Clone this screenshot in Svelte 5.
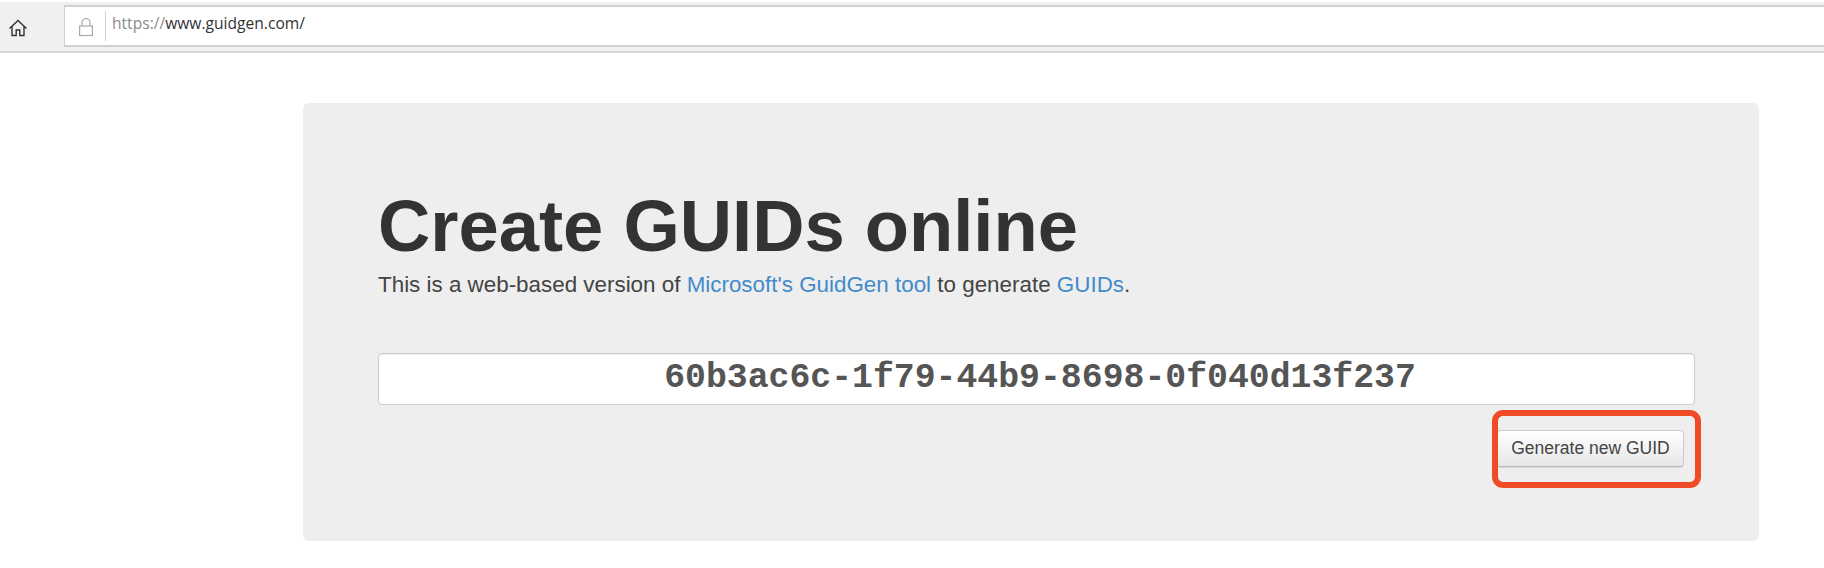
<script>
  const guid = '60b3ac6c-1f79-44b9-8698-0f040d13f237'
</script>

<div class="page">
  <header class="toolbar">
    <button class="home" aria-label="Home">
      <svg width="20" height="20" viewBox="0 0 20 20" fill="none" stroke="#333" stroke-width="1.4">
        <path d="M1.5 10.5 10 2.5l8.5 8M4 8.5V17.5h4.2v-5.5h3.6v5.5H16V8.5" />
      </svg>
    </button>
    <div class="address">
      <svg class="lock" width="16" height="20" viewBox="0 0 16 20" fill="none" stroke="#a8a8a8" stroke-width="1.2">
        <rect x="1.6" y="9" width="12.8" height="9.5" />
        <path d="M4 9V5.5a4 4 0 0 1 8 0V9" />
      </svg>
      <span class="divider"></span>
      <span class="url"><span class="scheme">https://</span>www.guidgen.com/</span>
    </div>
  </header>

  <main class="jumbotron">
    <h1>Create GUIDs online</h1>
    <p>
      This is a web-based version of <a href="#top">Microsoft's GuidGen tool</a> to generate <a href="#top">GUIDs</a>.
    </p>
    <div class="guid">{guid}</div>
    <div class="actions">
      <button class="generate">Generate new GUID</button>
      <span class="highlight"></span>
    </div>
  </main>
</div>

<style>
  :global(body) {
    background: #fff;
  }

  .page {
    width: 1824px;
    height: 568px;
    overflow: hidden;
    font-family: 'Liberation Sans', Arial, sans-serif;
  }

  .toolbar {
    display: flex;
    align-items: center;
    box-sizing: border-box;
    height: 51px;
    margin-top: 2px;
    background: #f0f0f0;
    border-bottom: 2px solid #d6d6d6;
  }

  .home {
    display: flex;
    align-items: center;
    justify-content: center;
    width: 64px;
    height: 100%;
    padding: 2px 28px 0 0;
    border: 0;
    background: none;
  }

  .address {
    display: flex;
    flex: 1;
    align-items: center;
    box-sizing: border-box;
    height: 42px;
    margin-top: -2px;
    padding-left: 13px;
    background: #fff;
    border: 1px solid #d0d0d0;
    border-right: 0;
    border-top-width: 2px;
    border-bottom-width: 2px;
  }

  .lock {
    margin-top: 2px;
  }

  .divider {
    width: 1px;
    height: 30px;
    margin-left: 11px;
    background: #d4d4d4;
  }

  .url {
    margin: -5px 0 0 6px;
    font-family: 'Open Sans', sans-serif;
    font-size: 15.6px;
    color: #333;
  }

  .scheme {
    color: #8a8a8a;
  }

  .jumbotron {
    box-sizing: border-box;
    width: 1456px;
    height: 438px;
    margin: 50px 0 0 303px;
    padding: 81px 64px 0 75px;
    background: #eee;
    border-radius: 6px;
    color: #333;
  }

  h1 {
    margin: 0;
    font-size: 72.4px;
    line-height: 84px;
    font-weight: 700;
    color: #333;
  }

  p {
    margin: 2px 0 0;
    font-size: 22.4px;
    line-height: 30px;
    color: #444;
  }

  a {
    color: #428bca;
    text-decoration: none;
  }

  .guid {
    box-sizing: border-box;
    height: 52px;
    margin-top: 53px;
    padding-left: 7px;
    background: #fff;
    border: 1px solid #ccc;
    border-radius: 4px;
    box-shadow: inset 0 1px 1px rgba(0, 0, 0, 0.075);
    font-family: 'Liberation Mono', 'Courier New', monospace;
    font-size: 34.8px;
    font-weight: 700;
    line-height: 48px;
    text-align: center;
    color: #555;
  }

  .actions {
    position: relative;
    display: flex;
    justify-content: flex-end;
    margin-top: 25px;
    padding-right: 11px;
  }

  .generate {
    width: 187px;
    height: 37px;
    padding: 0;
    background: linear-gradient(#fff, #e6e6e6);
    border: 1px solid #ccc;
    border-bottom-color: #bbb;
    border-radius: 4px;
    box-shadow: 0 1px 1px rgba(0, 0, 0, 0.1);
    font-family: inherit;
    font-size: 17.5px;
    color: #444;
  }

  .highlight {
    position: absolute;
    top: -20px;
    right: -6px;
    box-sizing: border-box;
    width: 209px;
    height: 78px;
    border: 6px solid #f04a26;
    border-radius: 11px;
  }
</style>
